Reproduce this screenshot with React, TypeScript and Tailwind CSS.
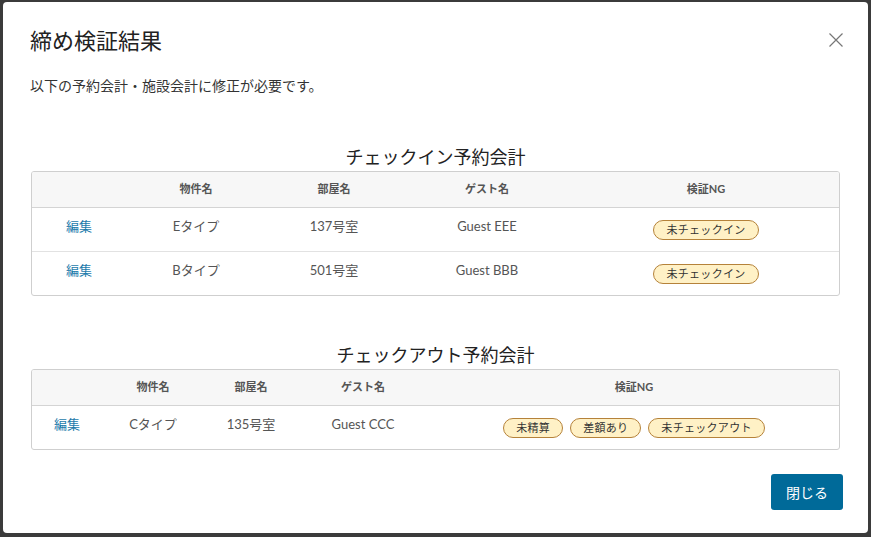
import React from "react";

type Row = { property: string; room: string; guest: string; ng: string[] };

const checkinRows: Row[] = [
  { property: "Eタイプ", room: "137号室", guest: "Guest EEE", ng: ["未チェックイン"] },
  { property: "Bタイプ", room: "501号室", guest: "Guest BBB", ng: ["未チェックイン"] },
];

const checkoutRows: Row[] = [
  { property: "Cタイプ", room: "135号室", guest: "Guest CCC", ng: ["未精算", "差額あり", "未チェックアウト"] },
];

function Badge({ label }: { label: string }) {
  return (
    <span className="inline-flex h-[20px] items-center rounded-full border border-[#b5823a] bg-[#fff1c6] px-[12px] text-[11px] leading-none text-[#333] tracking-[0.3px]">
      {label}
    </span>
  );
}

function ResultTable({ rows, widths }: { rows: Row[]; widths: number[] }) {
  return (
    <div className="overflow-hidden rounded-[3px] border border-[#cfcfcf]">
      <table className="w-full table-fixed border-collapse">
        <colgroup>
          {widths.map((w, i) => (
            <col key={i} style={{ width: w }} />
          ))}
        </colgroup>
        <thead>
          <tr className="h-[35px] border-b border-[#d4d4d4] bg-[#f7f7f7] text-[11px] font-bold text-[#555]">
            <th></th>
            <th className="font-bold">物件名</th>
            <th className="font-bold">部屋名</th>
            <th className="font-bold">ゲスト名</th>
            <th className="font-bold">検証NG</th>
          </tr>
        </thead>
        <tbody>
          {rows.map((r, i) => (
            <tr
              key={i}
              className={`h-[44px] text-[13px] text-[#555] ${i < rows.length - 1 ? "border-b border-[#e2e2e2]" : ""}`}
            >
              <td className="pt-[8px] text-center align-top leading-[20px]">
                <a className="cursor-pointer text-[#1d7bab]">編集</a>
              </td>
              <td className="pt-[8px] text-center align-top leading-[20px]">{r.property}</td>
              <td className="pt-[8px] text-center align-top leading-[20px]">{r.room}</td>
              <td className="pt-[8px] text-center align-top leading-[20px]">{r.guest}</td>
              <td className="pt-[12px] align-top">
                <div className="flex justify-center gap-[7px]">
                  {r.ng.map((n) => (
                    <Badge key={n} label={n} />
                  ))}
                </div>
              </td>
            </tr>
          ))}
        </tbody>
      </table>
    </div>
  );
}

export default function App() {
  return (
    <div
      className="h-[537px] w-[871px] overflow-hidden bg-[#3b3b3b] pl-[3px] pt-[2px]"
      style={{ fontFamily: 'Lato, "Noto Sans CJK JP", sans-serif' }}
    >
      <div className="relative flex h-[531px] w-[865px] flex-col rounded-[4px] bg-white px-[28px] pt-[24px]">
        <h1 className="text-[22px] leading-[30px] text-[#222]" style={{ marginLeft: -1 }}>
          締め検証結果
        </h1>
        <button className="absolute right-[25px] top-[31px] flex h-[14px] w-[14px] items-center justify-center text-[#777]">
          <svg width="14" height="14" viewBox="0 0 14 14" fill="none" stroke="currentColor" strokeWidth="1.2">
            <path d="M0.5 0.5L13.5 13.5M13.5 0.5L0.5 13.5" />
          </svg>
        </button>
        <p className="mt-[20px] text-[14px] leading-[20px] text-[#333]" style={{ marginLeft: -1 }}>
          以下の予約会計・施設会計に修正が必要です。
        </p>

        <h2 className="mt-[49px] text-center text-[18px] leading-[24px] text-[#222]">チェックイン予約会計</h2>
        <div className="mt-[2px]">
          <ResultTable rows={checkinRows} widths={[94, 140, 136, 170, 268]} />
        </div>

        <h2 className="mt-[47px] text-center text-[18px] leading-[24px] text-[#222]">チェックアウト予約会計</h2>
        <div className="mt-[2px]">
          <ResultTable rows={checkoutRows} widths={[70, 102, 94, 130, 412]} />
        </div>

        <div className="mt-[24px] flex justify-end" style={{ marginRight: -3 }}>
          <button className="h-[36px] w-[72px] rounded-[3px] bg-[#006a99] text-[14px] text-white">閉じる</button>
        </div>
      </div>
    </div>
  );
}
